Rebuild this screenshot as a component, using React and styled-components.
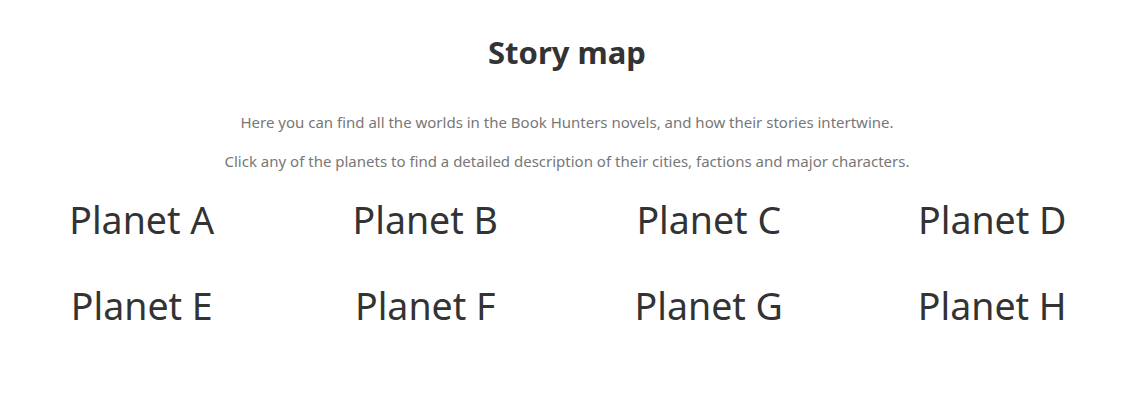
import React from "react";
import styled, { createGlobalStyle } from "styled-components";

const GlobalStyle = createGlobalStyle`
  body {
    margin: 0;
    background: #ffffff;
    font-family: "Noto Sans", "Open Sans", sans-serif;
  }
`;

const Page = styled.div`
  display: flex;
  flex-direction: column;
  align-items: center;
  padding-top: 32px;
`;

const Title = styled.h1`
  margin: 0 0 39px 0;
  font-size: 31px;
  line-height: 40px;
  font-weight: 700;
  color: #333333;
`;

const Intro = styled.p`
  margin: 0 0 17px 0;
  font-size: 15px;
  line-height: 22px;
  color: #777777;
  text-align: center;
`;

const PlanetGrid = styled.div`
  display: grid;
  grid-template-columns: repeat(4, 1fr);
  grid-auto-rows: 86px;
  width: 100%;
  margin-top: -13px;
`;

const Planet = styled.a`
  display: flex;
  justify-content: center;
  align-items: center;
  font-size: 37.5px;
  color: #333333;
  text-decoration: none;
  cursor: pointer;
`;

const planets = ["A", "B", "C", "D", "E", "F", "G", "H"];

export default function App() {
  return (
    <>
      <GlobalStyle />
      <Page>
        <Title>Story map</Title>
        <Intro>
          Here you can find all the worlds in the Book Hunters novels, and how their stories intertwine.
        </Intro>
        <Intro>
          Click any of the planets to find a detailed description of their cities, factions and major characters.
        </Intro>
        <PlanetGrid>
          {planets.map((p) => (
            <Planet key={p}>Planet {p}</Planet>
          ))}
        </PlanetGrid>
      </Page>
    </>
  );
}
